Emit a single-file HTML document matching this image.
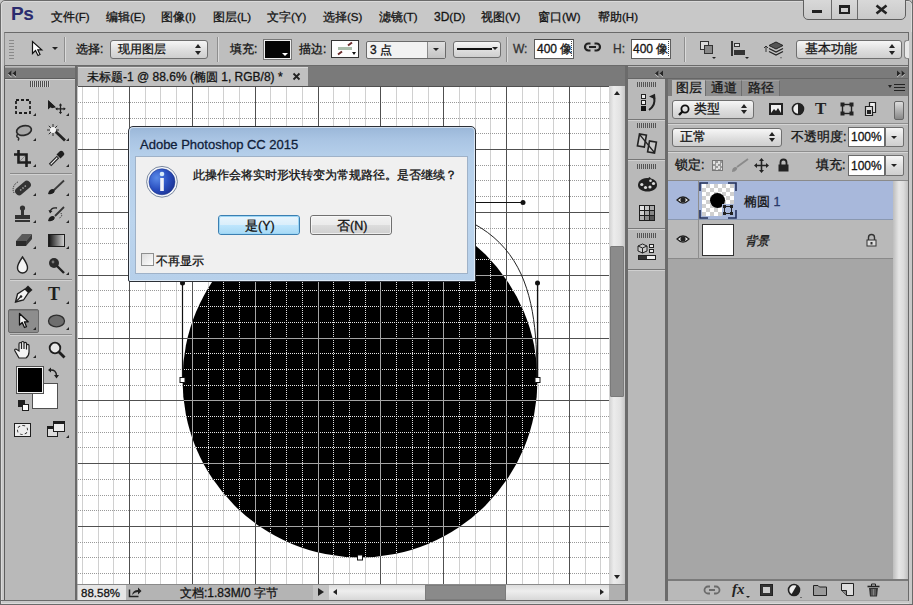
<!DOCTYPE html>
<html><head><meta charset="utf-8">
<style>
*{box-sizing:border-box;margin:0;padding:0}
html,body{width:913px;height:605px;overflow:hidden;background:#c8c8c8;font-family:"Liberation Sans",sans-serif;font-size:12px;color:#111}
.a{position:absolute}
.t{position:absolute;white-space:nowrap;font-size:12px;line-height:14px;color:#141414;-webkit-text-stroke:0.3px currentColor}
.menu .t{top:10px;font-size:12px}
.menu .t i{font-style:normal;font-size:11.5px;letter-spacing:0px}
.dd{position:absolute;border:1px solid #6f6f6f;border-radius:3px;background:linear-gradient(#f6f6f6,#dcdcdc 60%,#cfcfcf)}
.sep{position:absolute;width:2px;border-left:1px solid #8e8e8e;border-right:1px solid #dadada}
.inp{position:absolute;background:#fff;border:1px solid #5e5e5e;border-top-color:#4a4a4a}
svg{position:absolute;overflow:visible}
.ud{position:absolute;width:0;height:0;border-left:3px solid transparent;border-right:3px solid transparent}
</style></head><body>

<!-- ================= MENU BAR ================= -->
<div class="a" style="left:0;top:0;width:913px;height:605px;border:1px solid #6a6a6a;border-radius:5px 5px 0 0"></div>
<div class="a" style="left:1px;top:1px;width:911px;height:603px;border:1px solid #dadada;border-radius:4px 4px 0 0"></div>
<div class="a" style="left:11px;top:4px;font-weight:bold;font-size:19px;line-height:20px;color:#2b2b6e;letter-spacing:-0.5px">Ps</div>
<div class="menu">
<span class="t" style="left:51px">文件<i>(F)</i></span>
<span class="t" style="left:106px">编辑<i>(E)</i></span>
<span class="t" style="left:161px">图像<i>(I)</i></span>
<span class="t" style="left:213px">图层<i>(L)</i></span>
<span class="t" style="left:267px">文字<i>(Y)</i></span>
<span class="t" style="left:323px">选择<i>(S)</i></span>
<span class="t" style="left:379px">滤镜<i>(T)</i></span>
<span class="t" style="left:434px">3D<i>(D)</i></span>
<span class="t" style="left:481px">视图<i>(V)</i></span>
<span class="t" style="left:538px">窗口<i>(W)</i></span>
<span class="t" style="left:598px">帮助<i>(H)</i></span>
</div>
<!-- window buttons -->
<div class="a" style="left:803px;top:-3px;width:103px;height:23px;border:1px solid #5f5f5f;border-radius:0 0 5px 5px;background:linear-gradient(#dadada,#c9c9c9)"></div>
<div class="a" style="left:831px;top:0;width:1px;height:19px;background:#6a6a6a"></div>
<div class="a" style="left:857px;top:0;width:1px;height:19px;background:#6a6a6a"></div>
<div class="a" style="left:812px;top:10px;width:10px;height:3px;background:#222"></div>
<div class="a" style="left:839px;top:5px;width:11px;height:9px;border:2px solid #222;border-top-width:3px"></div>
<svg style="left:875px;top:4px" width="13" height="11"><path d="M1.5 1.5L11.5 9.5M11.5 1.5L1.5 9.5" stroke="#222" stroke-width="2.6"/></svg>

<!-- ================= OPTIONS BAR ================= -->
<div class="a" style="left:4px;top:32px;width:905px;height:34px;background:#bebebe;border-top:1px solid #6a6a6a;border-left:1px solid #8a8a8a;border-right:1px solid #6a6a6a;border-bottom:1px solid #6a6a6a"></div>
<div class="a" style="left:9px;top:40px;width:5px;height:19px;background:repeating-linear-gradient(#8a8a8a 0 1px,transparent 1px 3px)"></div>
<svg style="left:31px;top:40px" width="14" height="17"><path d="M1.5 1.5V13.5L4.5 10.5L7 15.5L9 14.5L6.8 9.8H10.8Z" fill="#fff" stroke="#111" stroke-width="1.2"/></svg>
<div class="ud" style="left:52px;top:47px;border-top:3px solid #222"></div>
<div class="sep" style="left:64px;top:37px;height:25px"></div>
<span class="t" style="left:76px;top:42px">选择:</span>
<div class="dd" style="left:110px;top:40px;width:98px;height:19px"></div>
<span class="t" style="left:118px;top:42px">现用图层</span>
<div class="ud" style="left:195px;top:44px;border-bottom:4px solid #222"></div>
<div class="ud" style="left:195px;top:51px;border-top:4px solid #222"></div>
<div class="sep" style="left:217px;top:37px;height:25px"></div>
<span class="t" style="left:230px;top:42px">填充:</span>
<div class="a" style="left:264px;top:40px;width:27px;height:19px;background:#050505;border:1px solid #f0f0f0;outline:1px solid #777"></div>
<div class="ud" style="left:282px;top:53px;border-top:3px solid #fff"></div>
<span class="t" style="left:299px;top:42px">描边:</span>
<div class="a" style="left:331px;top:40px;width:28px;height:18px;background:#fdfdfd;border:1px solid #333"></div>
<div class="a" style="left:338px;top:47px;width:14px;height:3px;background:#a9bcaa"></div>
<svg style="left:331px;top:40px" width="28" height="18"><path d="M17 5.5L21 2.5M7 14.5L11 11.5" stroke="#6a2a2a" stroke-width="2"/></svg>
<div class="ud" style="left:352px;top:52px;border-left-width:2.5px;border-right-width:2.5px;border-top:3px solid #111"></div>
<div class="a" style="left:366px;top:41px;width:80px;height:18px;border:1px solid #6a6a6a;border-radius:2px;background:#f2f2f2"></div>
<div class="a" style="left:427px;top:42px;width:18px;height:16px;border-left:1px solid #8a8a8a;background:linear-gradient(#e0e0e0,#c4c4c4)"></div>
<span class="t" style="left:370px;top:43px">3 点</span>
<div class="ud" style="left:433px;top:48px;border-top:3px solid #222"></div>
<div class="dd" style="left:453px;top:41px;width:48px;height:17px"></div>
<div class="a" style="left:457px;top:48px;width:35px;height:2px;background:#111"></div>
<div class="ud" style="left:492px;top:47px;border-top:3px solid #222"></div>
<div class="sep" style="left:506px;top:37px;height:25px"></div>
<span class="t" style="left:513px;top:42px;color:#333">W:</span>
<div class="inp" style="left:534px;top:39px;width:40px;height:20px"></div>
<span class="t" style="left:537px;top:42px">400 像</span>
<div class="a" style="left:571px;top:41px;width:1px;height:16px;background:repeating-linear-gradient(#444 0 1px,transparent 1px 2px)"></div>
<svg style="left:584px;top:42px" width="17" height="10"><path d="M6.5 1.5H4.5A3.2 3.2 0 0 0 4.5 8.5H6.5M10.5 1.5H12.5A3.2 3.2 0 0 1 12.5 8.5H10.5M5 5H12" stroke="#222" stroke-width="2.2" fill="none"/></svg>
<span class="t" style="left:613px;top:42px;color:#333">H:</span>
<div class="inp" style="left:631px;top:39px;width:40px;height:20px"></div>
<span class="t" style="left:633px;top:42px">400 像</span>
<div class="a" style="left:668px;top:41px;width:1px;height:16px;background:repeating-linear-gradient(#444 0 1px,transparent 1px 2px)"></div>
<div class="sep" style="left:684px;top:37px;height:25px"></div>
<!-- path ops icon -->
<div class="a" style="left:700px;top:41px;width:9px;height:9px;border:1px solid #333;background:#ddd"></div>
<div class="a" style="left:704px;top:45px;width:9px;height:9px;border:1px solid #333;background:#888"></div>
<div class="ud" style="left:712px;top:57px;border-left-width:2px;border-right-width:2px;border-top:2px solid #222"></div>
<!-- align icon -->
<div class="a" style="left:731px;top:41px;width:2px;height:15px;background:#333"></div>
<div class="a" style="left:734px;top:43px;width:6px;height:4px;border:1px solid #333;background:#ddd"></div>
<div class="a" style="left:734px;top:50px;width:11px;height:5px;background:#333"></div>
<div class="ud" style="left:745px;top:57px;border-left-width:2px;border-right-width:2px;border-top:2px solid #222"></div>
<!-- arrange icon -->
<svg style="left:762px;top:40px" width="24" height="20"><path d="M2 8L4 6L6 8M4 6V12" stroke="#333" fill="none"/><path d="M14 2L21 5.5L14 9L7 5.5Z" fill="#555" stroke="#222"/><path d="M7 8.5L14 12L21 8.5M7 11.5L14 15L21 11.5" stroke="#222" fill="none" stroke-width="1.3"/><path d="M18 17.5L20 17.5L19 18.5Z" fill="#222"/></svg>
<div class="dd" style="left:796px;top:40px;width:106px;height:19px"></div>
<span class="t" style="left:805px;top:42px;font-size:13px">基本功能</span>
<div class="ud" style="left:889px;top:44px;border-bottom:4px solid #222"></div>
<div class="ud" style="left:889px;top:51px;border-top:4px solid #222"></div>
<div class="a" style="left:904px;top:40px;width:5px;height:19px;border:1px solid #8a8a8a;border-right:none;border-radius:3px 0 0 3px;background:#e8e8e8"></div>


<!-- ================= TOOLBAR ================= -->
<div class="a" style="left:4px;top:66px;width:73px;height:535px;background:#b9b9b9;border-left:1px solid #5e5e5e;border-right:2px solid #6a6a6a;border-bottom:1px solid #6a6a6a"></div>
<div class="a" style="left:5px;top:67px;width:70px;height:1px;background:#a4a4a4"></div>
<div class="a" style="left:5px;top:68px;width:70px;height:11px;background:#7a7a7a;border-bottom:1px solid #5e5e5e"></div>
<div class="a" style="left:5px;top:79px;width:70px;height:1px;background:#d4d4d4"></div>
<svg style="left:7px;top:70px" width="10" height="8"><path d="M4.5 1.5L1 4.5L4.5 7.5ZM9 1.5L5.5 4.5L9 7.5Z" fill="#cfcfcf"/><path d="M4.5 0.5L1 3.5L4.5 6.5ZM9 0.5L5.5 3.5L9 6.5Z" fill="#262626"/></svg>
<div class="a" style="left:30px;top:81px;width:20px;height:6px;background:repeating-linear-gradient(90deg,#4e4e4e 0 1px,#d0d0d0 1px 2px)"></div>

<!-- row 1: marquee / move -->
<svg style="left:15px;top:99px" width="16" height="15"><rect x="1" y="1" width="14" height="13" fill="none" stroke="#1e1e1e" stroke-width="1.8" stroke-dasharray="3 2"/></svg>
<svg style="left:47px;top:99px" width="20" height="16"><path d="M1 1V10.5L3.6 8.3L5 9.2L8.8 8.2Z" fill="#1e1e1e"/><path d="M1 1L8.8 8.2H5.2Z" fill="#1e1e1e"/><path d="M13.5 5.5V14M9.3 9.8H17.7" stroke="#222" stroke-width="1.3"/><path d="M13.5 4.3L11.9 6.5H15.1ZM13.5 15.3L11.9 13.1H15.1ZM8.2 9.8L10.4 8.2V11.4ZM18.8 9.8L16.6 8.2V11.4Z" fill="#222"/></svg>
<!-- lasso / wand -->
<svg style="left:14px;top:124px" width="19" height="17"><ellipse cx="10" cy="6.5" rx="7.5" ry="4.8" transform="rotate(-12 10 6.5)" fill="#a8a8a8" stroke="#2a2a2a" stroke-width="1.7"/><path d="M4 9.8Q1.5 12.5 4 13.5Q5.5 14.5 4 16.5" stroke="#2a2a2a" fill="none" stroke-width="1.5"/></svg>
<svg style="left:46px;top:123px" width="21" height="19"><path d="M9 8L19 17.5" stroke="#222" stroke-width="2.8"/><path d="M7 1V13M1 7H13M2.8 2.8L11.2 11.2M11.2 2.8L2.8 11.2" stroke="#2a2a2a" stroke-width="1"/><circle cx="7" cy="7" r="3" fill="#f4f4f4"/></svg>
<!-- crop / eyedropper -->
<svg style="left:14px;top:150px" width="17" height="17"><path d="M4.5 0V12.5H17M0 4.5H12.5V17" stroke="#1e1e1e" stroke-width="2.6" fill="none"/><path d="M6 11L11 6" stroke="#888" stroke-width="1"/></svg>
<svg style="left:48px;top:150px" width="17" height="17"><path d="M2 15L10 7" stroke="#1e1e1e" stroke-width="3.4"/><path d="M2.7 14.3L9.3 7.7" stroke="#f2f2f2" stroke-width="1.2"/><path d="M8.5 4.5L12.5 8.5L15.5 5.5Q17 3.5 15 1.5Q13 0 11.5 1.5Z" fill="#1e1e1e"/></svg>
<div class="a" style="left:10px;top:173px;width:62px;height:1px;background:#8a8a8a"></div>
<div class="a" style="left:10px;top:174px;width:62px;height:1px;background:#d2d2d2"></div>
<!-- healing / brush -->
<svg style="left:12px;top:179px" width="21" height="18"><g transform="rotate(-40 11 9)"><rect x="2" y="5" width="18" height="8" rx="4" fill="#333"/><circle cx="8" cy="9" r="0.9" fill="#999"/><circle cx="11" cy="9" r="0.9" fill="#999"/><circle cx="14" cy="9" r="0.9" fill="#999"/></g><path d="M2 14A8 8 0 0 1 6 3" stroke="#222" stroke-dasharray="1 1" fill="none"/></svg>
<svg style="left:47px;top:180px" width="18" height="16"><path d="M7 10L17 0.5" stroke="#3a3a3a" stroke-width="1.8"/><path d="M1 14Q2 9 6 9Q9 10 7 12.5Q5 15 1 14Z" fill="#1e1e1e"/></svg>
<!-- stamp / history brush -->
<svg style="left:14px;top:205px" width="17" height="18"><circle cx="8.5" cy="3" r="2.6" fill="#333"/><rect x="7" y="5" width="3" height="5" fill="#333"/><rect x="1" y="10" width="15" height="4" fill="#333"/><rect x="1" y="15" width="15" height="2" fill="#333"/></svg>
<svg style="left:47px;top:205px" width="18" height="18"><path d="M8 11L17 2" stroke="#333" stroke-width="1.8"/><path d="M1 16Q2 11 6 11Q9 12 7 14.5Q5 17 1 16Z" fill="#1e1e1e"/><path d="M10 3Q4 2 3 7" stroke="#222" stroke-width="1.4" fill="none"/><path d="M1.5 5L3 8.5L5.5 6Z" fill="#222"/><path d="M14 8Q16 12 12 13" stroke="#222" stroke-dasharray="1 1" fill="none"/></svg>
<!-- eraser / gradient -->
<svg style="left:15px;top:233px" width="18" height="14"><path d="M1 8L7 1H17L11 8Z" fill="#5a5a5a"/><path d="M1 8H11V13H1Z" fill="#2a2a2a"/><path d="M11 8L17 1V6L11 13Z" fill="#3a3a3a"/></svg>
<div class="a" style="left:48px;top:234px;width:17px;height:13px;border:1px solid #1e1e1e;background:linear-gradient(90deg,#151515,#cfcfcf)"></div>
<!-- blur / dodge -->
<svg style="left:16px;top:256px" width="13" height="18"><path d="M6.5 1Q1 9 1.5 12A5 5 0 0 0 11.5 12Q12 9 6.5 1Z" fill="#f4f4f4" stroke="#222" stroke-width="1.4"/></svg>
<svg style="left:48px;top:257px" width="17" height="17"><circle cx="6" cy="6" r="5" fill="#2a2a2a"/><circle cx="5" cy="5" r="1.4" fill="#777"/><path d="M9 9L16 16" stroke="#222" stroke-width="2.4"/></svg>
<div class="a" style="left:10px;top:279px;width:62px;height:1px;background:#8a8a8a"></div>
<div class="a" style="left:10px;top:280px;width:62px;height:1px;background:#d2d2d2"></div>
<!-- pen / type -->
<svg style="left:14px;top:285px" width="19" height="18"><path d="M1.5 17L3.5 9L11 4L14.5 7.5L9.5 15Z" fill="#f4f4f4" stroke="#1e1e1e" stroke-width="1.3"/><path d="M1.5 17L6.5 12" stroke="#1e1e1e" stroke-width="1.1"/><circle cx="7" cy="11.5" r="1.3" fill="#1e1e1e"/><path d="M11 3.5L14 0.5L18.5 5L15 8Z" fill="#1e1e1e"/></svg>
<div class="a" style="left:48px;top:284px;font-family:'Liberation Serif',serif;font-weight:bold;font-size:18px;line-height:20px;color:#1e1e1e">T</div>
<!-- path select (active) / ellipse -->
<div class="a" style="left:8px;top:309px;width:31px;height:24px;background:#8d8d8d;border:1px solid #6a6a6a;border-radius:2px;box-shadow:inset 0 1px 0 #7a7a7a"></div>
<svg style="left:18px;top:312px" width="12" height="17"><path d="M1.5 1.5V13L4.2 10.5L6.5 15.5L8.5 14.7L6.4 9.8H10.2Z" fill="#f0f0f0" stroke="#111" stroke-width="1.3" stroke-linejoin="round"/></svg>
<svg style="left:47px;top:314px" width="19" height="14"><ellipse cx="9.5" cy="7" rx="8" ry="5.8" fill="#6e6e6e" stroke="#2e2e2e" stroke-width="1.3"/></svg>
<div class="a" style="left:10px;top:334px;width:62px;height:1px;background:#8a8a8a"></div>
<div class="a" style="left:10px;top:335px;width:62px;height:1px;background:#d2d2d2"></div>
<!-- hand / zoom -->
<svg style="left:13px;top:341px" width="21" height="18"><path d="M6 17L2 10Q1 8 3 8L6 10V3Q6 1.5 7.3 1.5Q8.5 1.5 8.5 3V8V1.8Q8.5 0.5 9.8 0.5Q11 0.5 11 1.8V8V2.5Q11 1.3 12.3 1.3Q13.5 1.3 13.5 2.5V8.5V4.5Q13.5 3.3 14.7 3.3Q16 3.3 16 4.5V11Q16 15 13 17Z" fill="#f4f4f4" stroke="#1e1e1e" stroke-width="1.2"/></svg>
<svg style="left:48px;top:341px" width="18" height="18"><circle cx="7" cy="7" r="5.3" fill="#e8e8e8" stroke="#1e1e1e" stroke-width="1.8"/><path d="M10.5 10.5L16.5 16.5" stroke="#1e1e1e" stroke-width="2.8"/></svg>
<!-- colors -->
<div class="a" style="left:32px;top:383px;width:26px;height:26px;background:#fff;border:1px solid #505050"></div>
<div class="a" style="left:17px;top:367px;width:26px;height:26px;background:#000;border:1px solid #f2f2f2;outline:1px solid #505050"></div>
<svg style="left:48px;top:366px" width="12" height="13"><path d="M2 4Q8.5 3.5 8.5 10" stroke="#1e1e1e" stroke-width="1.4" fill="none"/><path d="M0 4L3 1.5V6.5ZM8.5 12.5L6 9H11Z" fill="#1e1e1e"/></svg>
<div class="a" style="left:18px;top:400px;width:7px;height:7px;background:#1e1e1e"></div>
<div class="a" style="left:22px;top:404px;width:7px;height:7px;background:#fff;border:1px solid #1e1e1e"></div>
<!-- quickmask / screen -->
<div class="a" style="left:14px;top:423px;width:17px;height:14px;border:1px solid #1e1e1e;background:#eee"></div>
<div class="a" style="left:17px;top:425px;width:11px;height:10px;border:1px dashed #333;border-radius:50%"></div>
<div class="a" style="left:47px;top:426px;width:11px;height:11px;border:1px solid #1e1e1e;border-top-width:3px;background:#ddd"></div>
<div class="a" style="left:53px;top:421px;width:12px;height:11px;border:1px solid #1e1e1e;border-top-width:3px;background:#eee"></div>
<!-- flyout triangles -->
<svg style="left:0;top:0" width="78" height="440">
<g fill="#262626">
<path d="M36 113V116H33Z"/><path d="M69 113V116H66Z"/>
<path d="M36 138V141H33Z"/><path d="M69 138V141H66Z"/>
<path d="M36 164V167H33Z"/><path d="M69 164V167H66Z"/>
<path d="M36 193V196H33Z"/><path d="M69 193V196H66Z"/>
<path d="M36 220V223H33Z"/><path d="M69 220V223H66Z"/>
<path d="M36 246V249H33Z"/><path d="M69 246V249H66Z"/>
<path d="M36 272V275H33Z"/><path d="M69 272V275H66Z"/>
<path d="M36 301V304H33Z"/><path d="M69 301V304H66Z"/>
<path d="M36 327V330H33Z"/><path d="M69 327V330H66Z"/>
<path d="M36 355V358H33Z"/>
<path d="M69 435V438H66Z"/>
</g></svg>

<!-- ================= DOC TAB BAR ================= -->
<div class="a" style="left:77px;top:66px;width:548px;height:20px;background:#7a7a7a"></div>
<div class="a" style="left:78px;top:67px;width:230px;height:20px;background:#c0c0c0;border-top:1px solid #d8d8d8"></div>
<span class="t" style="left:87px;top:70px">未标题-1 @ 88.6% (椭圆 1, RGB/8) *</span>
<svg style="left:292px;top:72px" width="9" height="9"><path d="M1.5 1.5L7.5 7.5M7.5 1.5L1.5 7.5" stroke="#222" stroke-width="1.8"/></svg>

<!-- ================= CANVAS ================= -->
<svg style="left:78px;top:86px" width="531" height="498">
<defs><clipPath id="cin"><circle cx="282" cy="294" r="177.5"/></clipPath></defs>
<rect x="0" y="0" width="531" height="498" fill="#fff"/>
<path d="M4.5 0V498M20.5 0V498M35.5 0V498M67.5 0V498M82.5 0V498M98.5 0V498M130.5 0V498M145.5 0V498M161.5 0V498M192.5 0V498M208.5 0V498M224.5 0V498M255.5 0V498M271.5 0V498M287.5 0V498M318.5 0V498M334.5 0V498M350.5 0V498M381.5 0V498M397.5 0V498M412.5 0V498M444.5 0V498M460.5 0V498M475.5 0V498M507.5 0V498M522.5 0V498" stroke="#d0d0d0" stroke-dasharray="none" fill="none" shape-rendering="crispEdges"/><path d="M0 16.5H531M0 32.5H531M0 47.5H531M0 79.5H531M0 94.5H531M0 110.5H531M0 142.5H531M0 157.5H531M0 173.5H531M0 204.5H531M0 220.5H531M0 236.5H531M0 267.5H531M0 283.5H531M0 299.5H531M0 330.5H531M0 346.5H531M0 361.5H531M0 393.5H531M0 409.5H531M0 424.5H531M0 456.5H531M0 471.5H531M0 487.5H531" stroke="#999999" stroke-dasharray="1 1" fill="none" shape-rendering="crispEdges"/><path d="M51.5 0V498M114.5 0V498M177.5 0V498M240.5 0V498M302.5 0V498M365.5 0V498M428.5 0V498M491.5 0V498M0 0.5H531M0 63.5H531M0 126.5H531M0 189.5H531M0 252.5H531M0 314.5H531M0 377.5H531M0 440.5H531" stroke="#505050" fill="none" shape-rendering="crispEdges"/>
<circle cx="282" cy="294" r="177.5" fill="#000"/>
<g clip-path="url(#cin)"><path d="M4.5 0V498M20.5 0V498M35.5 0V498M67.5 0V498M82.5 0V498M98.5 0V498M130.5 0V498M145.5 0V498M161.5 0V498M192.5 0V498M208.5 0V498M224.5 0V498M255.5 0V498M271.5 0V498M287.5 0V498M318.5 0V498M334.5 0V498M350.5 0V498M381.5 0V498M397.5 0V498M412.5 0V498M444.5 0V498M460.5 0V498M475.5 0V498M507.5 0V498M522.5 0V498" stroke="#e0e0e0" stroke-dasharray="1 1" fill="none" shape-rendering="crispEdges"/><path d="M0 16.5H531M0 32.5H531M0 47.5H531M0 79.5H531M0 94.5H531M0 110.5H531M0 142.5H531M0 157.5H531M0 173.5H531M0 204.5H531M0 220.5H531M0 236.5H531M0 267.5H531M0 283.5H531M0 299.5H531M0 330.5H531M0 346.5H531M0 361.5H531M0 393.5H531M0 409.5H531M0 424.5H531M0 456.5H531M0 471.5H531M0 487.5H531" stroke="#e6e6e6" stroke-dasharray="1 1" fill="none" shape-rendering="crispEdges"/><path d="M51.5 0V498M114.5 0V498M177.5 0V498M240.5 0V498M302.5 0V498M365.5 0V498M428.5 0V498M491.5 0V498M0 0.5H531M0 63.5H531M0 126.5H531M0 189.5H531M0 252.5H531M0 314.5H531M0 377.5H531M0 440.5H531" stroke="#a4a4a4" fill="none" shape-rendering="crispEdges"/></g>
<!-- path preview -->
<path d="M282 115C445 116 459 197 459 294" stroke="#222" stroke-width="1" fill="none"/>
<path d="M104.5 294V197M459.5 294V197M282 116.5H445" stroke="#111" stroke-width="1.2"/>
<circle cx="104.5" cy="197" r="2.5" fill="#111"/>
<circle cx="459.5" cy="197" r="2.5" fill="#111"/>
<circle cx="445" cy="116.5" r="2.5" fill="#111"/>
<rect x="102" y="291.5" width="5" height="5" fill="#fff" stroke="#111"/>
<rect x="457" y="291.5" width="5" height="5" fill="#fff" stroke="#111"/>
<rect x="279.5" y="469" width="5" height="5" fill="#fff" stroke="#111"/>
</svg>

<!-- vertical scrollbar -->
<div class="a" style="left:609px;top:86px;width:16px;height:498px;background:linear-gradient(90deg,#d0d0d0,#ececec 30%,#e2e2e2 70%,#c6c6c6)"></div>
<div class="ud" style="left:614px;top:91px;border-left-width:3.5px;border-right-width:3.5px;border-bottom:4px solid #222"></div>
<div class="a" style="left:610px;top:246px;width:14px;height:151px;background:#8b8b8b;border:1px solid #7a7a7a;border-radius:1px"></div>
<div class="ud" style="left:614px;top:575px;border-left-width:3.5px;border-right-width:3.5px;border-top:4px solid #222"></div>
<div class="a" style="left:625px;top:66px;width:3px;height:535px;background:#6b6b6b"></div>

<!-- ================= STATUS BAR ================= -->
<div class="a" style="left:77px;top:584px;width:548px;height:16px;background:#b4b4b4;border-top:1px solid #8a8a8a"></div>
<div class="a" style="left:78px;top:585px;width:48px;height:15px;background:#e6e6e6"></div>
<span class="t" style="left:81px;top:586px;font-size:11.5px">88.58%</span>
<svg style="left:128px;top:586px" width="14" height="12"><path d="M1.5 3.5V10.5H10.5" stroke="#222" stroke-width="1.5" fill="none"/><path d="M4 9Q5 4 10 4V1.5L13.5 5L10 8.5V6Q6.5 6 4 9Z" fill="#222"/></svg>
<span class="t" style="left:180px;top:586px;font-size:12px">文档:1.83M/0 字节</span>
<div class="a" style="left:313px;top:585px;width:16px;height:15px;background:#c4c4c4"></div>
<div class="ud" style="left:318px;top:588px;border-top:4px solid transparent;border-bottom:4px solid transparent;border-left:6px solid #222;border-right:0"></div>
<div class="a" style="left:329px;top:585px;width:280px;height:15px;background:linear-gradient(#dcdcdc,#eeeeee 40%,#d8d8d8)"></div>
<div class="ud" style="left:333px;top:589px;border-top:3.5px solid transparent;border-bottom:3.5px solid transparent;border-right:4px solid #222;border-left:0"></div>
<div class="a" style="left:425px;top:585px;width:81px;height:15px;background:#8a8a8a;border:1px solid #7c7c7c"></div>
<div class="ud" style="left:600px;top:589px;border-top:3.5px solid transparent;border-bottom:3.5px solid transparent;border-left:4px solid #222;border-right:0"></div>
<div class="a" style="left:609px;top:585px;width:16px;height:15px;background:#b0b0b0"></div>
<div class="a" style="left:0;top:600px;width:913px;height:1px;background:#6a6a6a"></div>


<!-- ================= DOCK ICON COLUMN ================= -->
<div class="a" style="left:628px;top:66px;width:281px;height:535px;background:#b9b9b9"></div>
<div class="a" style="left:628px;top:67px;width:280px;height:12px;background:#7b7b7b;border-bottom:1px solid #666"></div>
<svg style="left:654px;top:70px" width="10" height="8"><path d="M4.5 1.5L1 4.5L4.5 7.5ZM9 1.5L5.5 4.5L9 7.5Z" fill="#cfcfcf"/><path d="M4.5 0.5L1 3.5L4.5 6.5ZM9 0.5L5.5 3.5L9 6.5Z" fill="#262626"/></svg>
<svg style="left:896px;top:70px" width="10" height="8"><path d="M1 1.5L4.5 4.5L1 7.5ZM5.5 1.5L9 4.5L5.5 7.5Z" fill="#cfcfcf"/><path d="M1 0.5L4.5 3.5L1 6.5ZM5.5 0.5L9 3.5L5.5 6.5Z" fill="#262626"/></svg>
<div class="a" style="left:628px;top:79px;width:37px;height:522px;background:#b9b9b9"></div>
<!-- group separators -->
<div class="a" style="left:628px;top:119px;width:37px;height:2px;background:#777;border-bottom:1px solid #d0d0d0"></div>
<div class="a" style="left:628px;top:159px;width:37px;height:2px;background:#777;border-bottom:1px solid #d0d0d0"></div>
<div class="a" style="left:628px;top:228px;width:37px;height:2px;background:#777;border-bottom:1px solid #d0d0d0"></div>
<div class="a" style="left:628px;top:269px;width:37px;height:2px;background:#777;border-bottom:1px solid #d0d0d0"></div>
<!-- grips -->
<div class="a" style="left:637px;top:82px;width:19px;height:5px;background:repeating-linear-gradient(90deg,#555 0 1px,transparent 1px 2px)"></div>
<div class="a" style="left:637px;top:123px;width:19px;height:5px;background:repeating-linear-gradient(90deg,#555 0 1px,transparent 1px 2px)"></div>
<div class="a" style="left:637px;top:164px;width:19px;height:5px;background:repeating-linear-gradient(90deg,#555 0 1px,transparent 1px 2px)"></div>
<div class="a" style="left:637px;top:233px;width:19px;height:5px;background:repeating-linear-gradient(90deg,#555 0 1px,transparent 1px 2px)"></div>
<!-- history icon -->
<div class="a" style="left:641px;top:94px;width:5px;height:5px;border:1px solid #222;background:#eee"></div>
<div class="a" style="left:641px;top:100px;width:5px;height:5px;border:1px solid #222;background:#eee"></div>
<div class="a" style="left:641px;top:106px;width:5px;height:5px;background:#111"></div>
<svg style="left:647px;top:93px" width="10" height="18"><path d="M2 17Q9 12 7 4" stroke="#222" stroke-width="2" fill="none"/><path d="M2 3.5L8 0.8L8.5 6.5Z" fill="#222"/></svg>
<!-- properties icon -->
<svg style="left:636px;top:133px" width="22" height="21"><g transform="rotate(10 6 7)"><rect x="2.5" y="1.5" width="7" height="12" fill="#c8c8c8" stroke="#222" stroke-width="1.6"/></g><g transform="rotate(10 16 14)"><rect x="12.5" y="8.5" width="7" height="11" fill="#c8c8c8" stroke="#222" stroke-width="1.6"/></g><path d="M4 2L18 19" stroke="#222" stroke-width="1.2"/></svg>
<!-- palette icon -->
<svg style="left:637px;top:177px" width="21" height="15"><path d="M10 1C4 1 0.8 5 1 8.5C1.3 12 5 14.5 10.5 14.5C15.5 14.5 20 12 20 8C20 5 18 1 10 1Z" fill="#222"/><path d="M12 0.5L14 4" stroke="#222" stroke-width="2"/><circle cx="4.8" cy="7.5" r="1.6" fill="#ddd"/><circle cx="8.5" cy="10.5" r="1.6" fill="#ddd"/><circle cx="13" cy="10" r="1.6" fill="#ddd"/><circle cx="16.5" cy="6.5" r="1.6" fill="#ddd"/><circle cx="13.5" cy="3.8" r="1.3" fill="#ddd"/></svg>
<!-- swatches grid -->
<svg style="left:639px;top:205px" width="16" height="16"><rect x="0" y="0" width="16" height="16" fill="#1e1e1e"/>
<rect x="1" y="1" width="4" height="4" fill="#e4e4e4"/><rect x="6" y="1" width="4" height="4" fill="#c8c8c8"/><rect x="11" y="1" width="4" height="4" fill="#a8a8a8"/>
<rect x="1" y="6" width="4" height="4" fill="#d0d0d0"/><rect x="6" y="6" width="4" height="4" fill="#a8a8a8"/><rect x="11" y="6" width="4" height="4" fill="#888"/>
<rect x="1" y="11" width="4" height="4" fill="#b0b0b0"/><rect x="6" y="11" width="4" height="4" fill="#8a8a8a"/><rect x="11" y="11" width="4" height="4" fill="#555"/></svg>
<!-- 3D icon -->
<svg style="left:637px;top:243px" width="20" height="18"><path d="M5.5 1L10 3V8L5.5 10L1 8V3Z" fill="#ccc" stroke="#222"/><path d="M1 3L5.5 5L10 3M5.5 5V10" stroke="#222" fill="none"/><rect x="12.5" y="1.5" width="4" height="3" fill="#eee" stroke="#222"/><rect x="12.5" y="6.5" width="4" height="3" fill="#eee" stroke="#222"/><rect x="1.5" y="12.5" width="17" height="4" fill="#eee" stroke="#222"/><rect x="2" y="13" width="8" height="3" fill="#333"/></svg>

<div class="a" style="left:665px;top:79px;width:3px;height:522px;background:#6b6b6b"></div>

<!-- ================= LAYERS PANEL ================= -->
<div class="a" style="left:668px;top:79px;width:241px;height:522px;background:#a6a6a6"></div>
<!-- tabs bar -->
<div class="a" style="left:668px;top:79px;width:240px;height:17px;background:#7e7e7e"></div>
<div class="a" style="left:705px;top:80px;width:37px;height:16px;background:#8f8f8f;border-right:1px solid #6e6e6e;border-left:1px solid #6e6e6e;border-top:1px solid #a0a0a0"></div>
<div class="a" style="left:742px;top:80px;width:38px;height:16px;background:#8f8f8f;border-right:1px solid #6e6e6e;border-top:1px solid #a0a0a0"></div>
<div class="a" style="left:672px;top:80px;width:33px;height:17px;background:#bababa"></div>
<span class="t" style="left:676px;top:81px;font-size:12.5px">图层</span>
<span class="t" style="left:711px;top:81px;font-size:12.5px;color:#181818">通道</span>
<span class="t" style="left:748px;top:81px;font-size:12.5px;color:#181818">路径</span>
<div class="ud" style="left:888px;top:85px;border-left-width:2.5px;border-right-width:2.5px;border-top:3px solid #222"></div>
<div class="a" style="left:894px;top:84px;width:11px;height:8px;background:repeating-linear-gradient(#222 0 1px,transparent 1px 3px)"></div>
<!-- top controls area -->
<div class="a" style="left:668px;top:96px;width:240px;height:85px;background:#bababa"></div>
<div class="dd" style="left:672px;top:100px;width:82px;height:19px"></div>
<svg style="left:678px;top:104px" width="12" height="12"><circle cx="7" cy="5" r="3.6" fill="none" stroke="#111" stroke-width="1.8"/><path d="M4.5 7.5L1 11" stroke="#111" stroke-width="2.4"/></svg>
<span class="t" style="left:694px;top:102px;font-size:12.5px">类型</span>
<div class="ud" style="left:741px;top:104px;border-bottom:4px solid #222"></div>
<div class="ud" style="left:741px;top:110px;border-top:4px solid #222"></div>
<!-- filter icons -->
<div class="a" style="left:769px;top:103px;width:14px;height:12px;border:2px solid #222;background:#f0f0f0"></div>
<svg style="left:771px;top:107px" width="10" height="6"><path d="M0 6L3 2L5 4L7 1L10 6Z" fill="#222"/></svg>
<svg style="left:791px;top:102px" width="14" height="14"><circle cx="7" cy="7" r="5.5" fill="#eee" stroke="#222" stroke-width="1.6"/><path d="M7 1.5A5.5 5.5 0 0 1 7 12.5Z" fill="#222"/></svg>
<div class="a" style="left:815px;top:100px;font-family:'Liberation Serif',serif;font-weight:bold;font-size:17px;line-height:18px;color:#222">T</div>
<svg style="left:840px;top:102px" width="14" height="14"><rect x="2.5" y="2.5" width="9" height="9" fill="none" stroke="#222" stroke-width="1.4"/><rect x="0.5" y="0.5" width="4" height="4" fill="#222"/><rect x="9.5" y="0.5" width="4" height="4" fill="#222"/><rect x="0.5" y="9.5" width="4" height="4" fill="#222"/><rect x="9.5" y="9.5" width="4" height="4" fill="#222"/></svg>
<svg style="left:864px;top:101px" width="14" height="16"><path d="M5.5 1.5H11.5V11.5H5.5Z" fill="#eee" stroke="#222" stroke-width="1.2"/><path d="M1.5 5.5H8.5V14.5H1.5Z" fill="#ddd" stroke="#222" stroke-width="1.2"/><rect x="3" y="9" width="4" height="4" fill="#222"/></svg>
<div class="a" style="left:894px;top:101px;width:10px;height:19px;border:1px solid #666;border-radius:2px;background:linear-gradient(#ddd,#888)"></div>
<div class="a" style="left:668px;top:123px;width:240px;height:1px;background:#8e8e8e"></div>
<div class="a" style="left:668px;top:124px;width:240px;height:1px;background:#d4d4d4"></div>
<!-- blend row -->
<div class="dd" style="left:672px;top:128px;width:110px;height:19px"></div>
<span class="t" style="left:680px;top:130px;font-size:12.5px">正常</span>
<div class="ud" style="left:769px;top:132px;border-bottom:4px solid #222"></div>
<div class="ud" style="left:769px;top:138px;border-top:4px solid #222"></div>
<span class="t" style="left:791px;top:130px;font-size:12.5px">不透明度:</span>
<div class="inp" style="left:848px;top:127px;width:37px;height:20px;border-color:#6a6a6a"></div>
<span class="t" style="left:851px;top:130px;font-size:12px">100%</span>
<div class="dd" style="left:885px;top:127px;width:19px;height:20px;border-radius:0 2px 2px 0"></div>
<div class="ud" style="left:891px;top:136px;border-top:3px solid #222"></div>
<div class="a" style="left:668px;top:151px;width:240px;height:1px;background:#8e8e8e"></div>
<div class="a" style="left:668px;top:152px;width:240px;height:1px;background:#d4d4d4"></div>
<!-- lock row -->
<span class="t" style="left:675px;top:158px;font-size:12.5px">锁定:</span>
<div class="a" style="left:712px;top:160px;width:11px;height:11px;border:1px solid #777;background:conic-gradient(#999 25%,#e0e0e0 0 50%,#999 0 75%,#e0e0e0 0) 0 0/5px 5px"></div>
<svg style="left:731px;top:158px" width="18" height="15"><path d="M6 9L17 1" stroke="#8a8a8a" stroke-width="1.8"/><path d="M1 14Q1 9 5 9Q7 10 5.5 12Q4 14 1 14Z" fill="#8a8a8a"/></svg>
<svg style="left:754px;top:158px" width="15" height="15"><path d="M7.5 2V13M2 7.5H13" stroke="#222" stroke-width="1.6"/><path d="M7.5 0L5 3H10ZM7.5 15L5 12H10ZM0 7.5L3 5V10ZM15 7.5L12 5V10Z" fill="#222"/></svg>
<svg style="left:778px;top:158px" width="11" height="14"><path d="M2.5 7V4.5A3 3 0 0 1 8.5 4.5V7" stroke="#222" stroke-width="1.8" fill="none"/><rect x="0.5" y="6.5" width="10" height="7" fill="#222"/></svg>
<span class="t" style="left:816px;top:158px;font-size:12.5px">填充:</span>
<div class="inp" style="left:848px;top:155px;width:37px;height:21px;border-color:#6a6a6a"></div>
<span class="t" style="left:851px;top:159px;font-size:12px">100%</span>
<div class="dd" style="left:885px;top:155px;width:19px;height:21px;border-radius:0 2px 2px 0"></div>
<div class="ud" style="left:891px;top:164px;border-top:3px solid #222"></div>
<div class="a" style="left:668px;top:180px;width:240px;height:1px;background:#8a8a8a"></div>

<!-- layer list -->
<div class="a" style="left:668px;top:181px;width:225px;height:39px;background:#a8b8db;border-bottom:1px solid #8a98b0"></div>
<div class="a" style="left:668px;top:220px;width:225px;height:39px;background:#b9b9b9;border-bottom:1px solid #8a8a8a"></div>
<div class="a" style="left:698px;top:181px;width:1px;height:78px;background:#8e8e8e"></div>
<!-- eyes -->
<svg style="left:676px;top:195px" width="14" height="10"><path d="M1 5Q7 -1 13 5Q7 11 1 5Z" fill="#eee" stroke="#222" stroke-width="1.2"/><circle cx="7" cy="5" r="2.6" fill="#222"/></svg>
<svg style="left:676px;top:234px" width="14" height="10"><path d="M1 5Q7 -1 13 5Q7 11 1 5Z" fill="#eee" stroke="#222" stroke-width="1.2"/><circle cx="7" cy="5" r="2.6" fill="#222"/></svg>
<!-- thumb 1 -->
<div class="a" style="left:702px;top:184px;width:32px;height:32px;background:conic-gradient(#d0d0d0 25%,#fff 0 50%,#d0d0d0 0 75%,#fff 0) 0 0/8px 8px"></div>
<div class="a" style="left:710px;top:193px;width:15px;height:15px;border-radius:50%;background:#000"></div>
<svg style="left:699px;top:182px" width="38" height="37"><path d="M1 9V1H9M29 1H37V9M1 28V36H9M29 36H37V28" stroke="#23305a" stroke-width="1.6" fill="none"/></svg>
<div class="a" style="left:722px;top:204px;width:12px;height:12px;background:#a8b8db"></div>
<svg style="left:722px;top:204px" width="12" height="12"><rect x="2.5" y="2.5" width="7" height="7" fill="none" stroke="#222"/><rect x="1" y="1" width="3" height="3" fill="#222"/><rect x="8" y="1" width="3" height="3" fill="#222"/><rect x="1" y="8" width="3" height="3" fill="#222"/><rect x="8" y="8" width="3" height="3" fill="#222"/></svg>
<span class="t" style="left:744px;top:195px;font-size:12.5px">椭圆 <span style="color:#2a3a6a">1</span></span>
<!-- thumb 2 -->
<div class="a" style="left:702px;top:224px;width:32px;height:32px;background:#fff;border:1px solid #333"></div>
<span class="t" style="left:745px;top:234px;font-size:12px;font-style:italic">背景</span>
<svg style="left:866px;top:233px" width="11" height="14"><path d="M2.5 7V4.5A3 3 0 0 1 8.5 4.5V7" stroke="#333" stroke-width="1.4" fill="none"/><rect x="1" y="7" width="9" height="6" fill="#ddd" stroke="#333"/><rect x="4.5" y="9" width="2" height="2.5" fill="#333"/></svg>
<!-- panel scrollbar -->
<div class="a" style="left:893px;top:181px;width:15px;height:400px;background:linear-gradient(90deg,#bdbdbd,#e6e6e6 40%,#dcdcdc 70%,#c0c0c0)"></div>
<div class="a" style="left:908px;top:66px;width:1px;height:535px;background:#6a6a6a"></div>
<!-- bottom bar -->
<div class="a" style="left:668px;top:579px;width:240px;height:21px;background:#b9b9b9;border-top:2px solid #7a7a7a"></div>
<svg style="left:704px;top:585px" width="16" height="10"><path d="M6 1.5H4A3 3 0 0 0 4 8.5H6M10 1.5H12A3 3 0 0 1 12 8.5H10M5 5H11" stroke="#6a6a6a" stroke-width="1.8" fill="none"/></svg>
<div class="a" style="left:732px;top:581px;font-family:'Liberation Serif',serif;font-style:italic;font-weight:bold;font-size:15px;line-height:16px;color:#222">fx</div>
<div class="ud" style="left:746px;top:596px;border-left-width:2px;border-right-width:2px;border-top:2px solid #222"></div>
<div class="a" style="left:760px;top:584px;width:13px;height:12px;background:#333;border:1px solid #222"></div>
<div class="a" style="left:763px;top:587px;width:7px;height:6px;background:#ccc"></div>
<svg style="left:787px;top:583px" width="16" height="16"><circle cx="7" cy="7" r="5.5" fill="#eee" stroke="#222" stroke-width="1.6"/><path d="M7 1.5A5.5 5.5 0 0 1 7 12.5Z" fill="#222" transform="rotate(30 7 7)"/><path d="M13 14L15 14L14 15Z" fill="#222"/></svg>
<svg style="left:813px;top:583px" width="14" height="13"><path d="M0.5 2.5H5L6.5 4H13.5V12.5H0.5Z" fill="#9a9a9a" stroke="#222"/></svg>
<svg style="left:841px;top:583px" width="13" height="14"><path d="M0.5 0.5H12.5V12.5H5.5L0.5 7.5Z" fill="#ddd" stroke="#222"/><path d="M0.5 7.5H5.5V12.5" fill="#888" stroke="#222"/></svg>
<svg style="left:867px;top:583px" width="13" height="14"><path d="M0.5 3.5H12.5" stroke="#222" stroke-width="1.6"/><path d="M4.5 3V1H8.5V3" stroke="#222" fill="none"/><path d="M2 5H11L10 13.5H3Z" fill="#333"/><path d="M5 6V12.5M6.5 6V12.5M8 6V12.5" stroke="#999" stroke-width="0.8"/></svg>
<div class="a" style="left:909px;top:32px;width:3px;height:572px;background:#c8c8c8"></div><div class="a" style="left:912px;top:0;width:1px;height:605px;background:#6a6a6a"></div><div class="a" style="left:0;top:604px;width:913px;height:1px;background:#6a6a6a"></div>


<!-- ================= DIALOG ================= -->
<div class="a" style="left:128px;top:126px;width:348px;height:156px;border:1px solid #2b2f36;border-radius:5px 5px 2px 2px;background:linear-gradient(#9ab7d8,#a9c4e3 12px,#b5cfea 28px,#bcd5ee 60%,#b7d0ea)"></div>
<div class="a" style="left:129px;top:127px;width:346px;height:154px;border:1px solid rgba(255,255,255,.55);border-radius:4px 4px 1px 1px"></div>
<span class="t" style="left:140px;top:137px;font-size:13px;line-height:15px;color:#10213a">Adobe Photoshop CC 2015</span>
<div class="a" style="left:135px;top:156px;width:333px;height:118px;background:#f0f0f0;border:1px solid #9fb2c8"></div>
<!-- info icon -->
<svg style="left:146px;top:166px" width="32" height="32">
<defs><radialGradient id="ig" cx="0.3" cy="0.35" r="0.8"><stop offset="0" stop-color="#5a8ae8"/><stop offset="0.55" stop-color="#2a4fc0"/><stop offset="1" stop-color="#1a2f8e"/></radialGradient></defs>
<circle cx="16" cy="15.8" r="15.4" fill="#f4f6fa" stroke="#7c8aa0" stroke-width="1"/>
<circle cx="16" cy="15.8" r="13" fill="url(#ig)" stroke="#223a90" stroke-width="0.6"/>
<circle cx="16" cy="8" r="2.3" fill="#d8ecfa"/>
<rect x="14.2" y="12" width="3.6" height="13" fill="#f2f2f8"/>
</svg>
<span id="msg" class="t" style="left:193px;top:168px;font-size:12px;line-height:14px;color:#111">此操作会将实时形状转变为常规路径。是否继续？</span>
<!-- buttons -->
<div class="a" style="left:218px;top:215px;width:82px;height:20px;border:1px solid #3c7fb1;border-radius:3px;background:linear-gradient(#e9f5fd,#d9eefb 50%,#bee6fd 50%,#a7d9f5)"></div>
<div class="a" style="left:219px;top:216px;width:80px;height:18px;border:1px solid #9cd6f5;border-radius:2px"></div>
<span class="t" style="left:245px;top:219px;font-size:12.5px;color:#111">是(Y)</span>
<div class="a" style="left:310px;top:215px;width:82px;height:20px;border:1px solid #707070;border-radius:3px;background:linear-gradient(#f2f2f2,#ebebeb 50%,#dddddd 50%,#cfcfcf)"></div>
<div class="a" style="left:311px;top:216px;width:80px;height:18px;border:1px solid #fbfbfb;border-radius:2px;opacity:.7"></div>
<span class="t" style="left:337px;top:219px;font-size:12.5px;color:#111">否(N)</span>
<!-- checkbox -->
<div class="a" style="left:141px;top:253px;width:13px;height:13px;border:1px solid #8e8f8f;background:linear-gradient(135deg,#dcdcdc,#fefefe)"></div>
<span class="t" style="left:156px;top:254px;font-size:12px;color:#111">不再显示</span>


</body></html>
